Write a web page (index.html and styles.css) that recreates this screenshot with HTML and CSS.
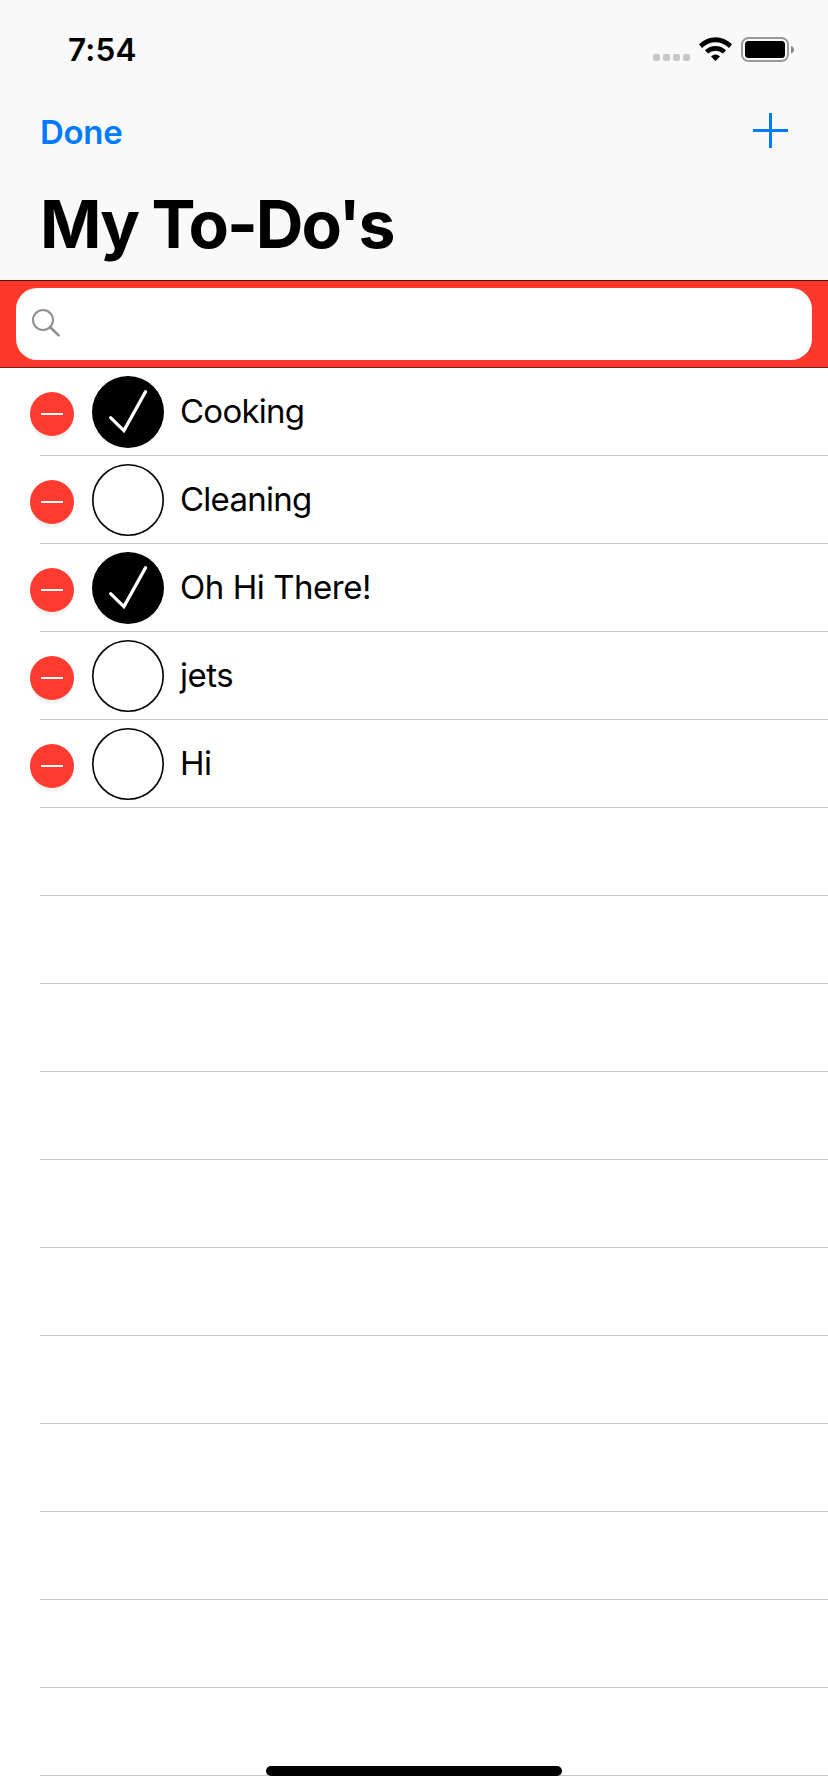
FILE: index.html
```html
<!DOCTYPE html>
<html lang="en">
<head>
<meta charset="utf-8">
<title>My To-Do's</title>
<link rel="stylesheet" href="styles.css">
</head>
<body>
<svg width="0" height="0" class="defs">
  <symbol id="check" viewBox="0 0 72 72"><circle cx="36" cy="36" r="36"/><path d="M18.6 41.6 31.9 54.6 53.6 15.6" fill="none" stroke="#fff" stroke-width="3.2" stroke-linecap="round"/></symbol>
  <symbol id="empty" viewBox="0 0 72 72"><circle cx="36" cy="36" r="35.2" fill="#fff" stroke="#000" stroke-width="1.6"/></symbol>
</svg>
<div class="screen">
  <header class="header">
    <div class="status">
      <span class="time">7:54</span>
      <svg class="indicators" width="142" height="26" viewBox="653 36 142 26">
        <g fill="#c7c7c7"><rect x="653" y="54" width="7" height="7" rx="2"/><rect x="663" y="54" width="7" height="7" rx="2"/><rect x="673" y="54" width="7" height="7" rx="2"/><rect x="683" y="54" width="7" height="7" rx="2"/></g>
        <path d="M699 44.2Q706.5 37.2 715.5 37.2T732 44.2L729 48Q723 42.3 715.5 42.3T702 48ZM705 50.3Q709.5 46 715.5 46T726 50.3L723 53.6Q719.7 50.8 715.5 50.8T708 53.6ZM711 56.4Q713 54.6 715.5 54.6T720 56.4L715.5 61Z"/>
        <rect x="742" y="38" width="46" height="23" rx="6.5" fill="none" stroke="#999" stroke-width="2"/>
        <rect x="745" y="41" width="40" height="17" rx="3.5"/>
        <path d="M791 46q3 1 3 3.8t-3 3.8z" fill="#888"/>
      </svg>
    </div>
    <nav class="nav">
      <span class="done">Done</span>
      <svg width="35" height="35" viewBox="0 0 35 35"><path d="M16 0h3v16h16v3H19v16h-3V19H0v-3h16z" fill="#007aff"/></svg>
    </nav>
    <h1 class="title">My To-Do's</h1>
  </header>
  <div class="search">
    <div class="field">
      <svg width="30" height="30" viewBox="0 0 30 30" fill="none" stroke="#8e8e93"><circle cx="12" cy="12" r="10" stroke-width="2"/><path d="M19.3 19.3 27.6 27.4" stroke-width="2.6" stroke-linecap="round"/></svg>
    </div>
  </div>
  <main class="list">
    <div class="row"><i class="del"></i><svg class="mark"><use href="#check"/></svg><span class="label tight">Cooking</span></div>
    <div class="row"><i class="del"></i><svg class="mark"><use href="#empty"/></svg><span class="label tight">Cleaning</span></div>
    <div class="row"><i class="del"></i><svg class="mark"><use href="#check"/></svg><span class="label">Oh Hi There!</span></div>
    <div class="row"><i class="del"></i><svg class="mark"><use href="#empty"/></svg><span class="label">jets</span></div>
    <div class="row"><i class="del"></i><svg class="mark"><use href="#empty"/></svg><span class="label">Hi</span></div>
    <div class="row"></div><div class="row"></div><div class="row"></div><div class="row"></div>
    <div class="row"></div><div class="row"></div><div class="row"></div><div class="row"></div>
    <div class="row"></div><div class="row"></div><div class="row"></div>
  </main>
  <div class="home"></div>
</div>
</body>
</html>
```
FILE: styles.css
```css
* { box-sizing: border-box; }
body { margin: 0; background: #fff; color: #000; font-family: Inter, "Liberation Sans", sans-serif; }
svg { display: block; flex: none; }
.defs { position: absolute; }
.screen { position: relative; width: 828px; height: 1792px; overflow: hidden; }
.header { height: 280px; background: #f9f9f9; }
.status { height: 88px; display: flex; justify-content: space-between; padding: 30px 33px 0 68px; }
.time { font-size: 31.5px; font-weight: 600; line-height: 40px; letter-spacing: 0.2px; }
.indicators { margin-top: 6px; }
.nav { height: 88px; display: flex; justify-content: space-between; align-items: flex-start; padding: 25px 40px 0 40px; }
.done { font-size: 33px; font-weight: 600; line-height: 40px; margin-top: -1px; letter-spacing: -0.3px; color: #007aff; }
.title { margin: 0; padding-left: 40px; font-size: 66px; font-weight: 700; line-height: 96px; letter-spacing: -2px; white-space: nowrap; }
.search { height: 88px; padding: 7px 16px; background: #ff382b; border-top: 1px solid #4a1512; border-bottom: 1px solid #7a1b15; }
.field { height: 72px; padding: 20px 15px; background: #fff; border-radius: 21px; }
.row { height: 88px; display: flex; align-items: flex-start; padding: 8px 0 0 30px; background: linear-gradient(#c8c7cc, #c8c7cc) 40px 87px / 100% 1px no-repeat; }
.del { flex: none; width: 44px; height: 44px; margin: 16px 18px 0 0; border-radius: 50%; background: linear-gradient(#fff, #fff) center / 22px 2px no-repeat #ff3b30; box-shadow: 0 4px 0 -0.5px #f2f2f2; }
.mark { width: 72px; height: 72px; margin-right: 16px; }
.label { font-size: 33px; line-height: 40px; margin-top: 15px; letter-spacing: -0.45px; white-space: nowrap; }
.tight { letter-spacing: -0.75px; }
.home { position: absolute; left: 266px; top: 1766px; width: 296px; height: 10px; border-radius: 5px; background: #000; }
```
